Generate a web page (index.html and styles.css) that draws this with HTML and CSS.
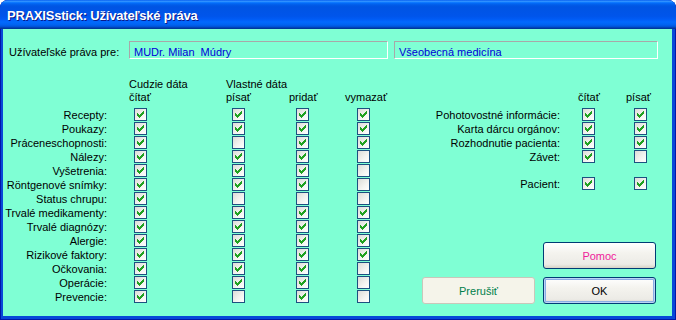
FILE: index.html
```html
<!DOCTYPE html>
<html lang="sk">
<head>
    <meta charset="UTF-8">
    <title>PRAXISstick: Užívateľské práva</title>
    <link rel="stylesheet" href="styles.css">
</head>
<body>
    <div class="window">
        <div class="titlebar">PRAXISstick: Užívateľské práva</div>
        <div class="client">
            <div class="owner">
                <span class="owner-label">Užívateľské práva pre:</span>
                <div class="field name">MUDr. Milan&nbsp; Múdry</div>
                <div class="field dept">Všeobecná medicína</div>
            </div>

            <div class="main">
                <!-- data rights matrix -->
                <div class="matrix">
                    <div class="mrow head1"><span></span><span>Cudzie dáta</span><span class="wide">Vlastné dáta</span></div>
                    <div class="mrow head2"><span></span><span>čítať</span><span>písať</span><span>pridať</span><span>vymazať</span></div>
                    <div class="mrow"><span class="label">Recepty:</span><i class="cb on"></i><i class="cb on"></i><i class="cb on"></i><i class="cb on"></i></div>
                    <div class="mrow"><span class="label">Poukazy:</span><i class="cb on"></i><i class="cb on"></i><i class="cb on"></i><i class="cb on"></i></div>
                    <div class="mrow"><span class="label">Práceneschopnosti:</span><i class="cb on"></i><i class="cb"></i><i class="cb on"></i><i class="cb on"></i></div>
                    <div class="mrow"><span class="label">Nálezy:</span><i class="cb on"></i><i class="cb on"></i><i class="cb on"></i><i class="cb"></i></div>
                    <div class="mrow"><span class="label">Vyšetrenia:</span><i class="cb on"></i><i class="cb on"></i><i class="cb on"></i><i class="cb"></i></div>
                    <div class="mrow"><span class="label">Röntgenové snímky:</span><i class="cb on"></i><i class="cb on"></i><i class="cb on"></i><i class="cb"></i></div>
                    <div class="mrow"><span class="label">Status chrupu:</span><i class="cb on"></i><i class="cb"></i><i class="cb"></i><i class="cb"></i></div>
                    <div class="mrow"><span class="label">Trvalé medikamenty:</span><i class="cb on"></i><i class="cb on"></i><i class="cb on"></i><i class="cb on"></i></div>
                    <div class="mrow"><span class="label">Trvalé diagnózy:</span><i class="cb on"></i><i class="cb on"></i><i class="cb on"></i><i class="cb on"></i></div>
                    <div class="mrow"><span class="label">Alergie:</span><i class="cb on"></i><i class="cb on"></i><i class="cb on"></i><i class="cb on"></i></div>
                    <div class="mrow"><span class="label">Rizikové faktory:</span><i class="cb on"></i><i class="cb on"></i><i class="cb on"></i><i class="cb on"></i></div>
                    <div class="mrow"><span class="label">Očkovania:</span><i class="cb on"></i><i class="cb on"></i><i class="cb on"></i><i class="cb"></i></div>
                    <div class="mrow"><span class="label">Operácie:</span><i class="cb on"></i><i class="cb on"></i><i class="cb on"></i><i class="cb"></i></div>
                    <div class="mrow"><span class="label">Prevencie:</span><i class="cb on"></i><i class="cb"></i><i class="cb on"></i><i class="cb"></i></div>
                </div>

                <div class="side">
                    <div class="srow head2"><span></span><span>čítať</span><span>písať</span></div>
                    <div class="srow"><span class="label">Pohotovostné informácie:</span><i class="cb on"></i><i class="cb on"></i></div>
                    <div class="srow"><span class="label">Karta dárcu orgánov:</span><i class="cb on"></i><i class="cb on"></i></div>
                    <div class="srow"><span class="label">Rozhodnutie pacienta:</span><i class="cb on"></i><i class="cb on"></i></div>
                    <div class="srow"><span class="label">Závet:</span><i class="cb on"></i><i class="cb"></i></div>
                    <div class="srow patient"><span class="label">Pacient:</span><i class="cb on"></i><i class="cb on"></i></div>

                    <div class="buttons">
                        <button class="btn help">Pomoc</button>
                        <button class="btn cancel">Prerušiť</button>
                        <button class="btn ok">OK</button>
                    </div>
                </div>
            </div>
        </div>
    </div>
</body>
</html>
```

FILE: styles.css
```css
* {
    margin: 0;
    padding: 0;
    box-sizing: border-box;
}

body {
    font-family: "Liberation Sans", Arial, sans-serif;
    font-size: 11px;
    color: #000;
    background: #fff;
}

.window {
    width: 676px;
    height: 320px;
    display: flex;
    flex-direction: column;
    background: #0848d8;
    border-radius: 8px 8px 0 0;
    overflow: hidden;
    box-shadow: inset 1px 0 #0019a8, inset -1px 0 #0019a8, inset 0 -1px #0019a8;
}

.titlebar {
    height: 29px;
    line-height: 31px;
    padding-left: 7px;
    color: #fff;
    font-size: 13px;
    font-weight: bold;
    letter-spacing: -0.2px;
    text-shadow: 1px 1px #0a1a8a;
    background: linear-gradient(to bottom, #0058ee 0%, #3593ff 4%, #288eff 6%, #127dff 8%, #036ffc 10%, #0262ee 14%, #0057e5 20%, #0054e3 24%, #0055eb 56%, #005bf5 66%, #026afe 76%, #0062ef 86%, #0052d6 92%, #0040ab 96%, #003092 100%);
}

.client {
    flex: 1;
    margin: 0 4px 4px 3px;
    background: #7fffd4;
    display: flex;
    flex-direction: column;
}

/* owner line */
.owner {
    display: flex;
    align-items: flex-start;
    margin-top: 12px;
    padding-left: 6px;
    line-height: 14px;
}

.owner-label {
    width: 120px;
    padding-top: 4px;
}

.field {
    height: 18px;
    padding: 3px 4px 0;
    color: #0000d8;
    border: 1px solid;
    border-color: #a8a8a8 #fff #fff #a8a8a8;
    white-space: nowrap;
}

.field.name {
    width: 259px;
}

.field.dept {
    width: 264px;
    margin-left: 6px;
}

.main {
    flex: 1;
    display: flex;
    margin-top: 19px;
}

/* matrix */
.matrix {
    width: 407px;
}

.mrow {
    display: grid;
    grid-template-columns: 126px 97px 63px 56px 1fr;
    height: 14px;
    line-height: 14px;
    white-space: nowrap;
}

.head1 {
    height: 13px;
    line-height: 13px;
}

.head1 .wide {
    grid-column: span 3;
}

.head2 {
    height: 17px;
    line-height: 13px;
}

.label {
    text-align: right;
    padding-right: 22px;
}

.mrow .cb:nth-child(2) { margin-left: 5px; }
.mrow .cb:nth-child(3) { margin-left: 6px; }
.mrow .cb:nth-child(4) { margin-left: 7px; }
.mrow .cb:nth-child(5) { margin-left: 12px; }

/* right panel */
.side {
    flex: 1;
    display: flex;
    flex-direction: column;
    padding-top: 13px;
}

.srow {
    display: grid;
    grid-template-columns: 168px 48px 1fr;
    height: 14px;
    line-height: 14px;
    white-space: nowrap;
}

.srow.head2 {
    height: 17px;
    line-height: 13px;
}

.srow .label {
    padding-right: 18px;
}

.srow .cb:nth-child(2) { margin-left: 4px; }
.srow .cb:nth-child(3) { margin-left: 8px; }

.srow.patient {
    margin-top: 13px;
}

/* checkbox */
.cb {
    position: relative;
    display: block;
    width: 13px;
    height: 13px;
    border: 1px solid #1c5180;
    background: linear-gradient(135deg, #dcdcd7 0%, #f4f4f1 60%, #fff 100%);
}

/* 7x7 pixel tick drawn with shadows */
.cb.on::after {
    content: "";
    position: absolute;
    left: 2px;
    top: 2px;
    width: 1px;
    height: 1px;
    box-shadow:
        6px 0 #21a121,
        5px 1px #21a121, 6px 1px #21a121,
        0 2px #21a121, 4px 2px #21a121, 5px 2px #21a121, 6px 2px #21a121,
        0 3px #21a121, 1px 3px #21a121, 3px 3px #21a121, 4px 3px #21a121, 5px 3px #21a121,
        0 4px #21a121, 1px 4px #21a121, 2px 4px #21a121, 3px 4px #21a121, 4px 4px #21a121,
        1px 5px #21a121, 2px 5px #21a121, 3px 5px #21a121,
        2px 6px #21a121;
}

/* buttons */
.buttons {
    margin-top: auto;
    margin-bottom: 12px;
    margin-right: 16px;
    align-self: flex-end;
    display: grid;
    grid-template-columns: 113px 113px;
    grid-template-rows: 27px 27px;
    gap: 8px;
}

.btn {
    font-family: "Liberation Sans", Arial, sans-serif;
    font-size: 11px;
    border: 1px solid #003c74;
    border-radius: 3px;
    background: linear-gradient(to bottom, #fff 0%, #f4f3ee 40%, #ecebe6 85%, #d8d2c6 100%);
    color: #000;
}

.btn.help {
    grid-column: 2;
    color: #f0209a;
}

.btn.cancel {
    border-color: #c9c7ba;
    background: #f5f4ea;
    color: #00804a;
}

.btn.ok {
    box-shadow: inset 0 0 0 1px #bcd4f6, inset 0 0 0 2px #89ade4;
}
```
